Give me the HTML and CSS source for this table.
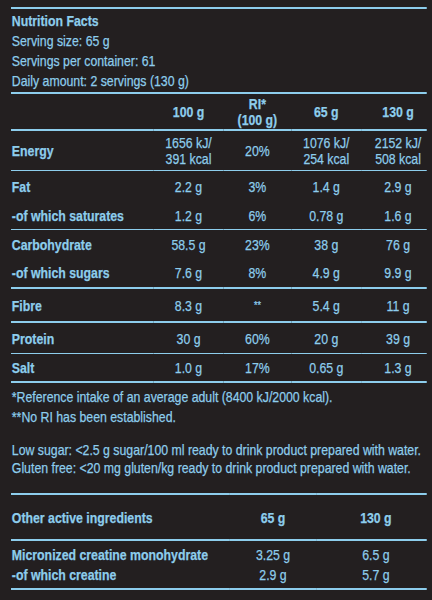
FILE: index.html
```html
<!DOCTYPE html>
<html lang="en">
<head>
  <meta charset="UTF-8" />
  <title>Nutrition Facts</title>
  <meta name="viewport" content="width=device-width, initial-scale=1.0" />
  <link rel="stylesheet" href="styles.css">
</head>
<body>

  <div class="label">
    <!-- Serving info -->
    <div class="intro">
      <div class="title">Nutrition Facts</div>
      <div>Serving size: 65 g</div>
      <div>Servings per container: 61</div>
      <div>Daily amount: 2 servings (130 g)</div>
    </div>

    <!-- Main table -->
    <table class="facts">
      <tr class="head">
        <td class="name"></td>
        <td class="c1">100 g</td>
        <td class="c2">RI*<br>(100 g)</td>
        <td class="c3">65 g</td>
        <td class="c4">130 g</td>
      </tr>
      <tr class="energy thin">
        <td class="name">Energy</td>
        <td>1656 kJ/<br>391 kcal</td>
        <td>20%</td>
        <td>1076 kJ/<br>254 kcal</td>
        <td class="c4">2152 kJ/<br>508 kcal</td>
      </tr>
      <tr class="r30">
        <td class="name">Fat</td>
        <td>2.2 g</td>
        <td>3%</td>
        <td>1.4 g</td>
        <td class="c4">2.9 g</td>
      </tr>
      <tr class="r28 thin">
        <td class="name">-of which saturates</td>
        <td>1.2 g</td>
        <td>6%</td>
        <td>0.78 g</td>
        <td class="c4">1.6 g</td>
      </tr>
      <tr class="r28">
        <td class="name">Carbohydrate</td>
        <td>58.5 g</td>
        <td>23%</td>
        <td>38 g</td>
        <td class="c4">76 g</td>
      </tr>
      <tr class="r29 thick">
        <td class="name">-of which sugars</td>
        <td>7.6 g</td>
        <td>8%</td>
        <td>4.9 g</td>
        <td class="c4">9.9 g</td>
      </tr>
      <tr class="r32 thick">
        <td class="name">Fibre</td>
        <td>8.3 g</td>
        <td class="stars">**</td>
        <td>5.4 g</td>
        <td class="c4">11 g</td>
      </tr>
      <tr class="r30 thin">
        <td class="name">Protein</td>
        <td>30 g</td>
        <td>60%</td>
        <td>20 g</td>
        <td class="c4">39 g</td>
      </tr>
      <tr class="r27 thick">
        <td class="name">Salt</td>
        <td>1.0 g</td>
        <td>17%</td>
        <td>0.65 g</td>
        <td class="c4">1.3 g</td>
      </tr>
    </table>

    <!-- Notes -->
    <div class="notes">
      <p class="refs">*Reference intake of an average adult (8400 kJ/2000 kcal).<br>**No RI has been established.</p>
      <p class="claims">Low sugar: &lt;2.5 g sugar/100 ml ready to drink product prepared with water.<br>Gluten free: &lt;20 mg gluten/kg ready to drink product prepared with water.</p>
    </div>

    <!-- Other active ingredients -->
    <table class="active">
      <tr class="head">
        <td class="name">Other active ingredients</td>
        <td class="ca">65 g</td>
        <td class="cb">130 g</td>
      </tr>
      <tr class="first">
        <td class="name">Micronized creatine monohydrate</td>
        <td class="ca">3.25 g</td>
        <td class="cb">6.5 g</td>
      </tr>
      <tr class="second">
        <td class="name">-of which creatine</td>
        <td class="ca">2.9 g</td>
        <td class="cb">5.7 g</td>
      </tr>
    </table>
  </div>

</body>
</html>
```

FILE: styles.css
```css
html, body {
  overflow: hidden;
}
body {
  margin: 0;
  background: #231f20;
  color: #8dcdec;
  font-family: "Liberation Sans", Arial, sans-serif;
  font-size: 15px;
  -webkit-text-stroke: 0.25px #8dcdec;
}

/* condensed face: the label type is a narrow grotesque */
.label {
  width: 507px;
  margin: 7px 0 0 11px;
  transform: scaleX(0.82);
  transform-origin: 0 0;
}

/* Intro */
.intro {
  border-top: 2px solid #8dcdec;
  border-bottom: 2px solid #8dcdec;
  padding: 2px 0 1px 1px;
  line-height: 20px;
}
.title {
  font-weight: bold;
}

/* Tables */
table {
  width: 100%;
  border-collapse: collapse;
  table-layout: fixed;
}
td {
  padding: 0;
  text-align: center;
  vertical-align: middle;
  white-space: nowrap;
}
td.name {
  text-align: left;
  font-weight: bold;
  padding-left: 1px;
}
.facts td.name { width: 173px; }
.facts td.c1 { width: 85px; }
.facts td.c2 { width: 83px; }
.facts td.c3 { width: 85px; }
.facts td.c4 {
  width: 70px;
  padding-left: 10px;
}
.facts tr.head td {
  font-weight: bold;
  height: 35px;
  line-height: 16px;
  border-bottom: 2px solid #8dcdec;
}
.facts tr.energy td {
  height: 39px;
  line-height: 16px;
}
.facts tr.thin td {
  border-bottom: 1px solid #8dcdec;
}
.facts tr.thick td {
  border-bottom: 2px solid #8dcdec;
}
.r27 td { height: 27px; }
.r28 td { height: 28px; }
.r29 td { height: 29px; }
.r30 td { height: 30px; }
.r32 td { height: 32px; }
.stars {
  font-size: 11px;
}

/* Notes */
.notes {
  padding: 4px 0 16px 1px;
}
.notes p {
  margin: 0;
}
.refs {
  line-height: 20px;
}
.notes .claims {
  margin-top: 14px;
  line-height: 18px;
}

/* Active ingredients */
.active {
  border-top: 2px solid #8dcdec;
  border-bottom: 2px solid #8dcdec;
}
.active td.name { width: 265px; }
.active td.ca { width: 107px; }
.active td.cb {
  width: 124px;
  padding-left: 10px;
}
.active tr.head td {
  font-weight: bold;
  height: 44px;
  border-bottom: 2px solid #8dcdec;
}
.active tr.first td {
  height: 24px;
  vertical-align: bottom;
  line-height: 20px;
}
.active tr.second td {
  height: 23px;
  vertical-align: top;
  line-height: 20px;
}
```
